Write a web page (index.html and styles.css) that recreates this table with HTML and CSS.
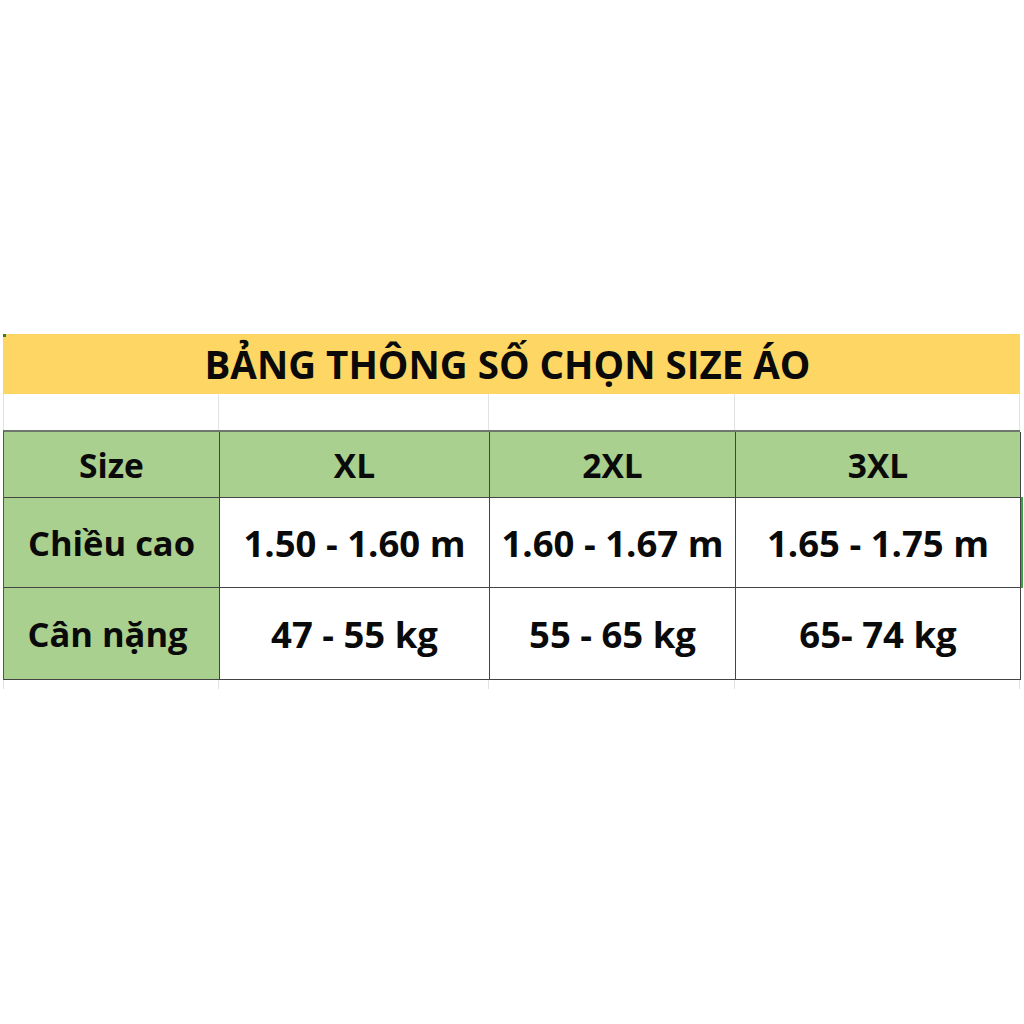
FILE: index.html
```html
<!DOCTYPE html>
<html lang="vi">
<head>
<meta charset="utf-8">
<title>Bảng thông số chọn size áo</title>
<link rel="stylesheet" href="styles.css">
</head>
<body>
<div class="sheet">
  <div class="banner"><span class="corner"></span>BẢNG THÔNG SỐ CHỌN SIZE ÁO</div>
  <div class="gap-row">
    <div class="gcell"></div><div class="gcell"></div><div class="gcell"></div><div class="gcell"></div>
  </div>
  <div class="table">
    <div class="cell head">Size</div>
    <div class="cell head">XL</div>
    <div class="cell head">2XL</div>
    <div class="cell head">3XL</div>

    <div class="cell label r2">Chiều cao</div>
    <div class="cell val r2">1.50 - 1.60 m</div>
    <div class="cell val r2">1.60 - 1.67 m</div>
    <div class="cell val r2 sel">1.65 - 1.75 m</div>

    <div class="cell label r3 left">Cân nặng</div>
    <div class="cell val r3">47 - 55 kg</div>
    <div class="cell val r3">55 - 65 kg</div>
    <div class="cell val r3">65- 74 kg</div>
  </div>
  <div class="tail-row">
    <div class="tcell"></div><div class="tcell"></div><div class="tcell"></div><div class="tcell"></div>
  </div>
</div>
</body>
</html>
```

FILE: styles.css
```css
html, body {
  margin: 0;
  padding: 0;
  background: #ffffff;
}
.sheet {
  width: 1017px;
  margin-left: 3px;
  padding-top: 334px;
  font-family: "Open Sans", "Liberation Sans", sans-serif;
  font-weight: 700;
  color: #0a0a0a;
}
.banner {
  position: relative;
  height: 60px;
  background: #fdd663;
  display: flex;
  align-items: center;
  justify-content: center;
  font-size: 38.5px;
  letter-spacing: 0;
  padding-right: 8px;
  box-sizing: border-box;
}
.corner {
  position: absolute;
  left: 0;
  top: 0;
  width: 3px;
  height: 3px;
  background: #2e7d32;
}
.gap-row, .tail-row {
  display: grid;
  grid-template-columns: 216px 270px 246px 285px;
}
.gap-row { height: 36px; }
.tail-row { height: 9px; }
.gcell, .tcell {
  border-right: 1px solid #e2e2e2;
}
.gcell:first-child, .tcell:first-child {
  border-left: 1px solid #e2e2e2;
}
.table {
  display: grid;
  grid-template-columns: 216px 270px 246px 285px;
  grid-template-rows: 66px 90px 92px;
  border-top: 2px solid #6f766d;
  border-left: 1px solid #555;
}
.cell {
  display: flex;
  align-items: center;
  justify-content: center;
  border-right: 1px solid #444;
  border-bottom: 1px solid #444;
  box-sizing: border-box;
  position: relative;
}
.head {
  background: #a9d08e;
  font-size: 33.5px;
}
.label {
  background: #a9d08e;
  font-size: 34.5px;
}
.left {
  padding-right: 8px;
}
.val {
  background: #ffffff;
  font-size: 36.5px;
}
.sel::after {
  content: "";
  position: absolute;
  right: -3px;
  top: -1px;
  bottom: -1px;
  width: 2px;
  background: #3aa14a;
}
```
